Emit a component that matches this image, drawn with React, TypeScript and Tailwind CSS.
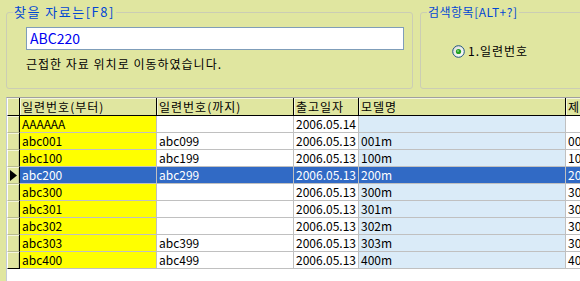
import React from "react";

const font = "font-[family-name:'Noto_Sans_CJK_KR','Noto_Sans',sans-serif]";

type Row = { a: string; b: string; d: string; m: string; e: string; sel?: boolean };

const rows: Row[] = [
  { a: "AAAAAA", b: "", d: "2006.05.14", m: "", e: "" },
  { a: "abc001", b: "abc099", d: "2006.05.13", m: "001m", e: "001" },
  { a: "abc100", b: "abc199", d: "2006.05.13", m: "100m", e: "100" },
  { a: "abc200", b: "abc299", d: "2006.05.13", m: "200m", e: "200", sel: true },
  { a: "abc300", b: "", d: "2006.05.13", m: "300m", e: "300" },
  { a: "abc301", b: "", d: "2006.05.13", m: "301m", e: "301" },
  { a: "abc302", b: "", d: "2006.05.13", m: "302m", e: "302" },
  { a: "abc303", b: "abc399", d: "2006.05.13", m: "303m", e: "303" },
  { a: "abc400", b: "abc499", d: "2006.05.13", m: "400m", e: "400" },
];

const RadioOn = () => (
  <svg width="13" height="13" viewBox="0 0 13 13">
    <defs>
      <linearGradient id="rg" x1="0" y1="0" x2="1" y2="1">
        <stop offset="0" stopColor="#dcdcd6" />
        <stop offset="1" stopColor="#ffffff" />
      </linearGradient>
    </defs>
    <circle cx="6.5" cy="6.5" r="5.8" fill="url(#rg)" stroke="#1c5180" strokeWidth="1" />
    <circle cx="6.5" cy="6.5" r="2.6" fill="#21a121" />
    <circle cx="6" cy="6" r="1" fill="#7fd07f" />
  </svg>
);

const HeadCell = ({ w, children }: { w: string; children?: React.ReactNode }) => (
  <div
    className={`${w} shrink-0 h-full border-r border-b border-black bg-[#e0e6a0] shadow-[inset_1px_1px_0_#f4f6dc] pl-[2px] leading-[17px] tracking-[1px] whitespace-nowrap overflow-hidden`}
  >
    {children}
  </div>
);

export default function App() {
  return (
    <div className={`w-[580px] h-[281px] bg-[#e0e6a0] overflow-hidden text-[12px] text-black ${font}`}>
      {/* 검색 영역 */}
      <div className="flex pt-[5px] gap-[7px] ml-[6px]">
        <fieldset className="shrink-0 w-[407px] h-[84px] border border-[#cbcdb4] rounded-[3px]">
          <legend className="ml-[6px] px-[1px] text-[13px] leading-[14px] tracking-[1.5px] text-[#0046d5]">
            찾을 자료는[F8]
          </legend>
          <div className="pl-[19px] pt-[8px]">
            <div className="w-[378px] h-[23px] border border-[#7f9db9] bg-white pl-[3px] text-[14px] leading-[21px] text-[#0000f0]">
              ABC220
            </div>
            <div className="mt-[7px] leading-[14px] tracking-[1px]">근접한 자료 위치로 이동하였습니다.</div>
          </div>
        </fieldset>
        <fieldset className="shrink-0 w-[200px] h-[84px] border border-[#cbcdb4] rounded-[3px]">
          <legend className="ml-[6px] px-[1px] text-[12px] leading-[14px] tracking-[0.5px] text-[#0046d5]">
            검색항목[ALT+?]
          </legend>
          <div className="flex items-center gap-[3px] pl-[31px] mt-[25px] h-[14px]">
            <RadioOn />
            <span className="leading-[14px] tracking-[1px]">1.일련번호</span>
          </div>
        </fieldset>
      </div>

      {/* 그리드 */}
      <div className="mt-[8px] ml-[6px] w-[620px] h-[184px] bg-white border-t border-l border-t-[#a0a0a0] border-l-[#c4cad8]">
        <div className="flex h-[18px]">
          <div className="w-[13px] shrink-0 h-full border-l border-l-white border-r border-b border-black bg-[#e0e6a0] shadow-[inset_0_1px_0_#f4f6dc]" />
          <HeadCell w="w-[137px]">일련번호(부터)</HeadCell>
          <HeadCell w="w-[137px]">일련번호(까지)</HeadCell>
          <HeadCell w="w-[65px]">출고일자</HeadCell>
          <HeadCell w="w-[207px]">모델명</HeadCell>
          <HeadCell w="w-[80px]">제품명</HeadCell>
        </div>
        {rows.map((r, i) => {
          const last = i === rows.length - 1;
          const txt = r.sel ? "text-white" : "text-black";
          const cell = "shrink-0 h-full border-r border-b border-[#c0c0c0] pl-[2px] leading-[16px] whitespace-nowrap overflow-hidden";
          return (
            <div key={i} className={`flex h-[17px] ${txt}`}>
              <div
                className={`w-[13px] shrink-0 h-full border-l border-l-white border-r border-r-black border-b ${
                  last ? "border-b-black" : "border-b-[#b8bc90]"
                } bg-[#e0e6a0] shadow-[inset_0_1px_0_#f4f6dc,inset_-1px_0_0_#c4c898] flex items-center pl-[2px]`}
              >
                {r.sel && (
                  <svg width="7" height="11" viewBox="0 0 7 11">
                    <path d="M0 0 L7 5.5 L0 11 Z" fill="#000" />
                  </svg>
                )}
              </div>
              <div className={`${cell} w-[137px] ${r.sel ? "bg-[#316ac5]" : "bg-[#ffff00]"}`}>{r.a}</div>
              <div className={`${cell} w-[137px] ${r.sel ? "bg-[#316ac5]" : "bg-white"}`}>{r.b}</div>
              <div className={`${cell} w-[65px] ${r.sel ? "bg-[#316ac5]" : "bg-white"}`}>{r.d}</div>
              <div className={`${cell} w-[207px] ${r.sel ? "bg-[#316ac5]" : "bg-[#daebf8]"}`}>{r.m}</div>
              <div className={`${cell} w-[80px] ${r.sel ? "bg-[#316ac5]" : "bg-white"}`}>{r.e}</div>
            </div>
          );
        })}
      </div>
    </div>
  );
}
